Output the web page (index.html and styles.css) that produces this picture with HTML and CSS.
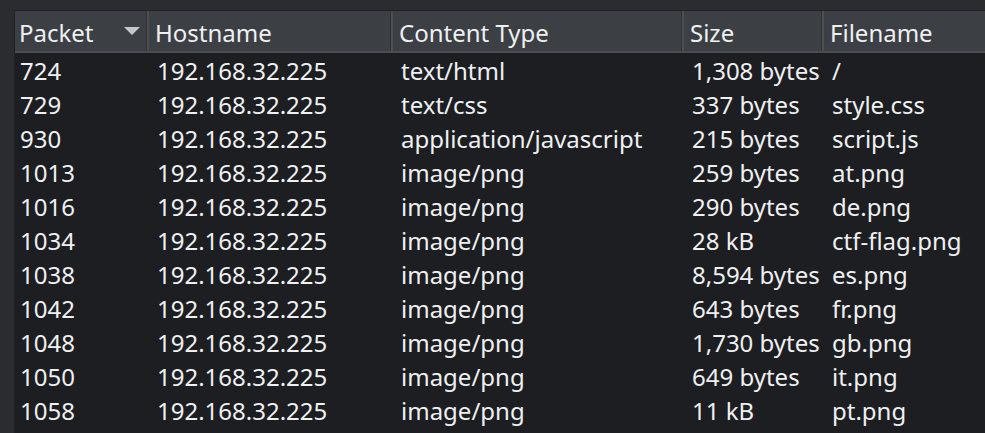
FILE: index.html
```html
<!DOCTYPE html>
<html>
<head>
<meta charset="utf-8">
<link rel="stylesheet" href="styles.css">
</head>
<body>
<div class="view">
  <div class="header">
    <div class="hcell first">Packet<span class="sort"></span></div>
    <div class="hcell">Hostname</div>
    <div class="hcell">Content Type</div>
    <div class="hcell">Size</div>
    <div class="hcell last">Filename</div>
  </div>
  <div class="body">
    <div class="row"><span>724</span><span>192.168.32.225</span><span>text/html</span><span>1,308 bytes</span><span>/</span></div>
    <div class="row"><span>729</span><span>192.168.32.225</span><span>text/css</span><span>337 bytes</span><span>style.css</span></div>
    <div class="row"><span>930</span><span>192.168.32.225</span><span>application/javascript</span><span>215 bytes</span><span>script.js</span></div>
    <div class="row"><span>1013</span><span>192.168.32.225</span><span>image/png</span><span>259 bytes</span><span>at.png</span></div>
    <div class="row"><span>1016</span><span>192.168.32.225</span><span>image/png</span><span>290 bytes</span><span>de.png</span></div>
    <div class="row"><span>1034</span><span>192.168.32.225</span><span>image/png</span><span>28 kB</span><span>ctf-flag.png</span></div>
    <div class="row"><span>1038</span><span>192.168.32.225</span><span>image/png</span><span>8,594 bytes</span><span>es.png</span></div>
    <div class="row"><span>1042</span><span>192.168.32.225</span><span>image/png</span><span>643 bytes</span><span>fr.png</span></div>
    <div class="row"><span>1048</span><span>192.168.32.225</span><span>image/png</span><span>1,730 bytes</span><span>gb.png</span></div>
    <div class="row"><span>1050</span><span>192.168.32.225</span><span>image/png</span><span>649 bytes</span><span>it.png</span></div>
    <div class="row"><span>1058</span><span>192.168.32.225</span><span>image/png</span><span>11 kB</span><span>pt.png</span></div>
  </div>
</div>
</body>
</html>
```

FILE: styles.css
```css
html, body {
  margin: 0;
  padding: 0;
  height: 100%;
  overflow: hidden;
}
body {
  background: #2a2c30;
  font-family: "Noto Sans", "Open Sans", sans-serif;
  font-size: 24px;
  color: #eff0f1;
}
.view {
  margin: 10px 0 0 14px;
  border-top: 1px solid #1f2124;
  border-left: 1px solid #1f2124;
  height: calc(100% - 11px);
  background: #1c1e21;
  overflow: hidden;
}
.header, .row {
  display: grid;
  grid-template-columns: 134px 244px 291px 140px 1fr;
  white-space: nowrap;
}
.header {
  background: #3c3f44;
  height: 40px;
  border-bottom: 2px solid #4a4d52;
}
.hcell {
  position: relative;
  padding: 3px 0 0 6px;
  line-height: 37px;
  border-right: 2px solid #4c4f54;
  box-shadow: inset -1px 0 0 #303236;
  overflow: hidden;
}
.hcell.first {
  padding-left: 4px;
}
.hcell.last {
  border-right: none;
  box-shadow: none;
}
.sort {
  position: absolute;
  right: 7px;
  top: 16px;
  width: 0;
  height: 0;
  border-left: 8px solid transparent;
  border-right: 8px solid transparent;
  border-top: 8px solid #c6c7c9;
}
.body {
  padding-top: 1px;
}
.row {
  height: 34px;
  line-height: 34px;
}
.row span {
  padding-left: 8px;
  overflow: hidden;
}
.row span:first-child {
  padding-left: 5px;
}
```
